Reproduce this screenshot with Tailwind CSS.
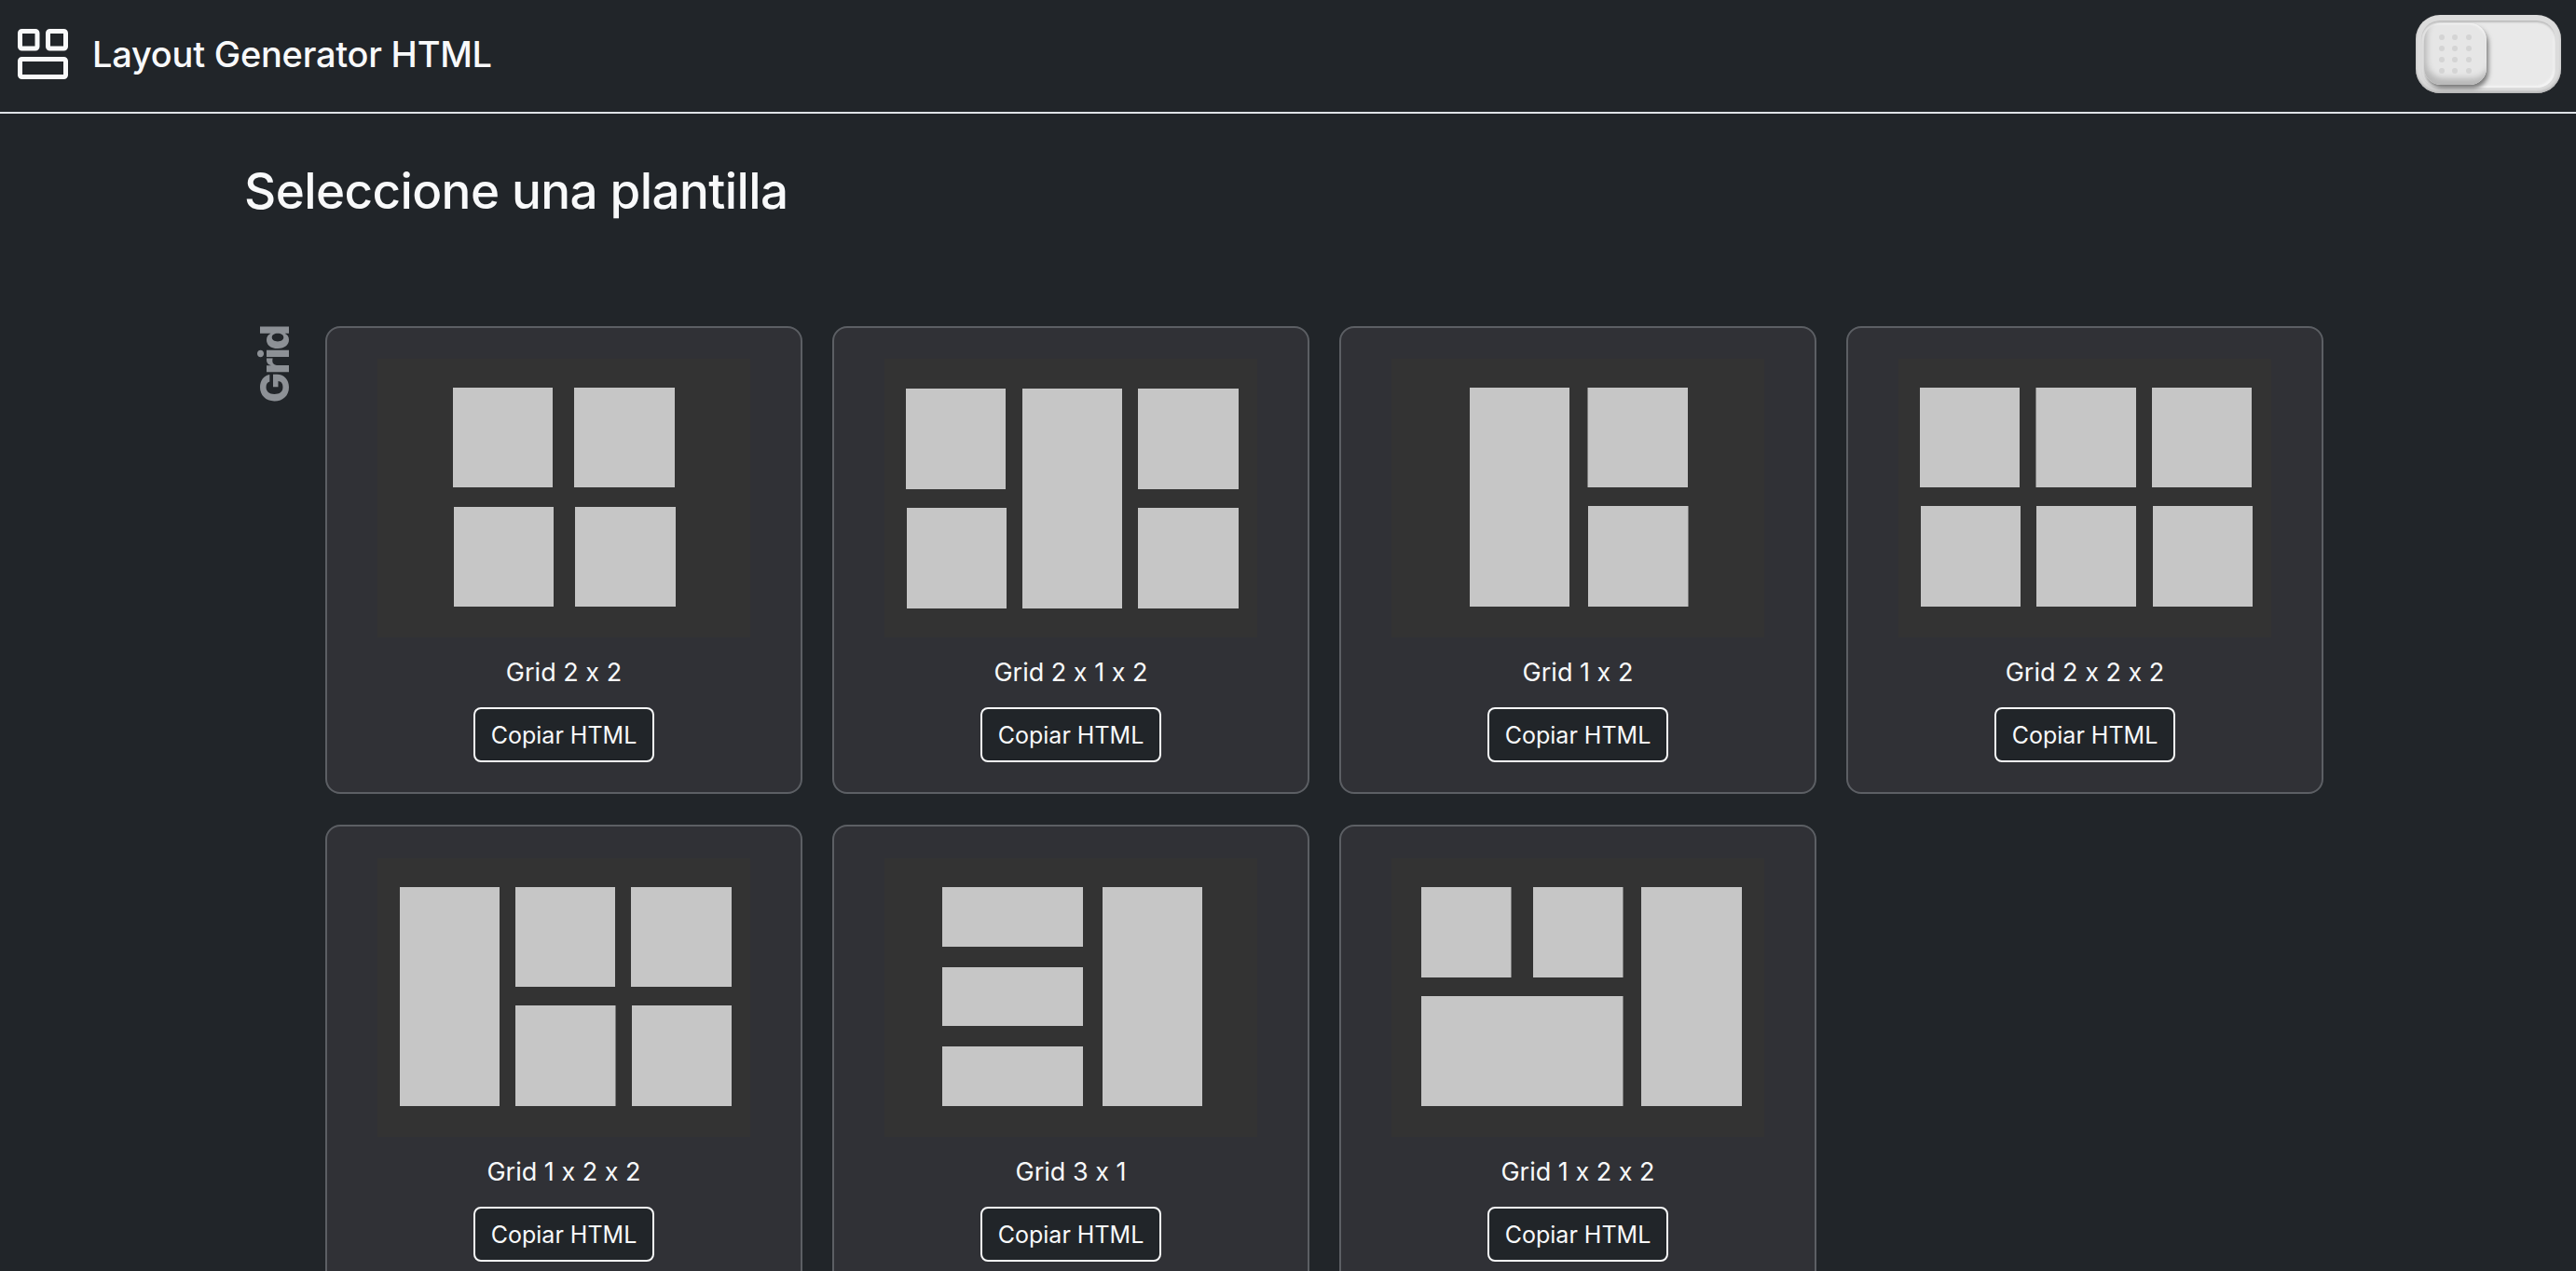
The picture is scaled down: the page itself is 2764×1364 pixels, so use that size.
<!DOCTYPE html>
<html lang="es">
<head>
    <meta charset="UTF-8">
    <meta name="viewport" content="width=device-width, initial-scale=1.0">
    <title>Layout Generator HTML</title>
    <script src="https://cdn.jsdelivr.net/npm/@tailwindcss/browser@4"></script>
</head>
<body class="bg-[#212529] text-[#f8f9fa] font-['Inter',sans-serif] [font-feature-settings:'calt'_0]">
<div class="h-[1364px] overflow-hidden">

    <!-- Navbar -->
    <header class="h-[122px] border-b-2 border-[#dee2e6] pl-[19px] pr-[16px] flex justify-between items-start">
        <div class="flex items-center gap-[26px] h-[116px]">
            <svg class="w-[54px] h-[54px]" viewBox="0 0 54 54" fill="none" stroke="#f8f9fa" stroke-width="5">
                <rect x="2.5" y="2.5" width="18.5" height="18.5" rx="2"/>
                <rect x="32.5" y="2.5" width="19" height="18.5" rx="2"/>
                <rect x="2.5" y="32.5" width="49" height="19" rx="2"/>
            </svg>
            <span class="text-[38px] leading-[57px] font-medium tracking-[-0.25px]">Layout Generator HTML</span>
        </div>

        <!-- Toggle -->
        <div class="relative mt-[16px] w-[156px] h-[84px] rounded-[26px] bg-[#dcdcdc] p-[6px] shadow-[inset_0_-2px_3px_#b5b5b5]">
            <div class="w-full h-full rounded-[20px] bg-[#e9e9e9] shadow-[inset_0_2px_2px_#bdbdbd,inset_-2px_-2px_2px_#f4f4f4]"></div>
            <div class="absolute left-[9px] top-[9px] w-[67px] h-[66px] rounded-[18px] bg-[#e6e6e6] shadow-[inset_3px_-7px_6px_#b8b8b8,inset_-1px_1px_2px_#f5f5f5,2px_4px_5px_#787878] grid grid-cols-3 gap-x-[6px] gap-y-[6px] content-center justify-center justify-items-center px-[15px]">
                <span class="w-[6px] h-[6px] rounded-full bg-[#d4d4d4]"></span><span class="w-[6px] h-[6px] rounded-full bg-[#d4d4d4]"></span><span class="w-[6px] h-[6px] rounded-full bg-[#d4d4d4]"></span>
                <span class="w-[6px] h-[6px] rounded-full bg-[#d4d4d4]"></span><span class="w-[6px] h-[6px] rounded-full bg-[#d4d4d4]"></span><span class="w-[6px] h-[6px] rounded-full bg-[#d4d4d4]"></span>
                <span class="w-[6px] h-[6px] rounded-full bg-[#d4d4d4]"></span><span class="w-[6px] h-[6px] rounded-full bg-[#d4d4d4]"></span><span class="w-[6px] h-[6px] rounded-full bg-[#d4d4d4]"></span>
                <span class="w-[6px] h-[6px] rounded-full bg-[#d4d4d4]"></span><span class="w-[6px] h-[6px] rounded-full bg-[#d4d4d4]"></span><span class="w-[6px] h-[6px] rounded-full bg-[#d4d4d4]"></span>
            </div>
        </div>
    </header>

    <main class="pl-[262px]">
        <h1 class="mt-[50px] mb-[111px] text-[53px] leading-[67px] font-medium tracking-[-0.6px]">Seleccione una plantilla</h1>

        <section class="flex">
            <div class="w-[87px] shrink-0 pl-[7px]">
                <h2 class="[writing-mode:vertical-rl] rotate-180 text-[43px] leading-[50px] font-extrabold tracking-[-2px] text-[#8d9196]">Grid</h2>
            </div>

            <div class="grid grid-cols-[repeat(4,512px)] gap-x-[32px] gap-y-[33px]">

                <!-- Grid 2 x 2 -->
                <div class="flex flex-col items-center border-2 border-[#5c5f64] rounded-[16px] bg-[#303136] pt-[33px] pb-[32px]">
                    <div class="w-[400px] h-[299px] bg-[#333333]">
                        <svg class="blur-[0.7px]" width="400" height="299" fill="#c6c6c6">
                            <rect x="81" y="31" width="107" height="107"/><rect x="211" y="31" width="108" height="107"/>
                            <rect x="82" y="159" width="107" height="107"/><rect x="212" y="159" width="108" height="107"/>
                        </svg>
                    </div>
                    <p class="mt-[17px] text-[27px] leading-[42px]">Grid 2 x 2</p>
                    <button class="mt-[16px] h-[59px] px-[17px] border-2 border-[#f8f9fa] rounded-[8px] bg-[#212529] text-[25px] leading-[42px]">Copiar HTML</button>
                </div>

                <!-- Grid 2 x 1 x 2 -->
                <div class="flex flex-col items-center border-2 border-[#5c5f64] rounded-[16px] bg-[#303136] pt-[33px] pb-[32px]">
                    <div class="w-[400px] h-[299px] bg-[#333333]">
                        <svg class="blur-[0.7px]" width="400" height="299" fill="#c6c6c6">
                            <rect x="23" y="32" width="107" height="108"/><rect x="24" y="160" width="107" height="108"/>
                            <rect x="148" y="32" width="107" height="236"/>
                            <rect x="272" y="32" width="108" height="108"/><rect x="272" y="160" width="108" height="108"/>
                        </svg>
                    </div>
                    <p class="mt-[17px] text-[27px] leading-[42px]">Grid 2 x 1 x 2</p>
                    <button class="mt-[16px] h-[59px] px-[17px] border-2 border-[#f8f9fa] rounded-[8px] bg-[#212529] text-[25px] leading-[42px]">Copiar HTML</button>
                </div>

                <!-- Grid 1 x 2 -->
                <div class="flex flex-col items-center border-2 border-[#5c5f64] rounded-[16px] bg-[#303136] pt-[33px] pb-[32px]">
                    <div class="w-[400px] h-[299px] bg-[#333333]">
                        <svg class="blur-[0.7px]" width="400" height="299" fill="#c6c6c6">
                            <rect x="84" y="31" width="107" height="235"/>
                            <rect x="210.5" y="31" width="107.5" height="107"/><rect x="211" y="158" width="107.5" height="108"/>
                        </svg>
                    </div>
                    <p class="mt-[17px] text-[27px] leading-[42px]">Grid 1 x 2</p>
                    <button class="mt-[16px] h-[59px] px-[17px] border-2 border-[#f8f9fa] rounded-[8px] bg-[#212529] text-[25px] leading-[42px]">Copiar HTML</button>
                </div>

                <!-- Grid 2 x 2 x 2 -->
                <div class="flex flex-col items-center border-2 border-[#5c5f64] rounded-[16px] bg-[#303136] pt-[33px] pb-[32px]">
                    <div class="w-[400px] h-[299px] bg-[#333333]">
                        <svg class="blur-[0.7px]" width="400" height="299" fill="#c6c6c6">
                            <rect x="23" y="31" width="107" height="107"/><rect x="147.5" y="31" width="107.5" height="107"/><rect x="272" y="31" width="107" height="107"/>
                            <rect x="24" y="158" width="107" height="108"/><rect x="148" y="158" width="107" height="108"/><rect x="273" y="158" width="107" height="108"/>
                        </svg>
                    </div>
                    <p class="mt-[17px] text-[27px] leading-[42px]">Grid 2 x 2 x 2</p>
                    <button class="mt-[16px] h-[59px] px-[17px] border-2 border-[#f8f9fa] rounded-[8px] bg-[#212529] text-[25px] leading-[42px]">Copiar HTML</button>
                </div>

                <!-- Grid 1 x 2 x 2 -->
                <div class="flex flex-col items-center border-2 border-[#5c5f64] rounded-[16px] bg-[#303136] pt-[34px] pb-[32px]">
                    <div class="w-[400px] h-[299px] bg-[#333333]">
                        <svg class="blur-[0.7px]" width="400" height="299" fill="#c6c6c6">
                            <rect x="24" y="31" width="107" height="235"/>
                            <rect x="148" y="31" width="107" height="107"/><rect x="272" y="31" width="108" height="107"/>
                            <rect x="148" y="158" width="107.5" height="108"/><rect x="273" y="158" width="107" height="108"/>
                        </svg>
                    </div>
                    <p class="mt-[17px] text-[27px] leading-[42px]">Grid 1 x 2 x 2</p>
                    <button class="mt-[16px] h-[59px] px-[17px] border-2 border-[#f8f9fa] rounded-[8px] bg-[#212529] text-[25px] leading-[42px]">Copiar HTML</button>
                </div>

                <!-- Grid 3 x 1 -->
                <div class="flex flex-col items-center border-2 border-[#5c5f64] rounded-[16px] bg-[#303136] pt-[34px] pb-[32px]">
                    <div class="w-[400px] h-[299px] bg-[#333333]">
                        <svg class="blur-[0.7px]" width="400" height="299" fill="#c6c6c6">
                            <rect x="62" y="31" width="151" height="64"/><rect x="62" y="117" width="151" height="63"/><rect x="62" y="202" width="151" height="64"/>
                            <rect x="234" y="31" width="107" height="235"/>
                        </svg>
                    </div>
                    <p class="mt-[17px] text-[27px] leading-[42px]">Grid 3 x 1</p>
                    <button class="mt-[16px] h-[59px] px-[17px] border-2 border-[#f8f9fa] rounded-[8px] bg-[#212529] text-[25px] leading-[42px]">Copiar HTML</button>
                </div>

                <!-- Grid 1 x 2 x 2 (segunda) -->
                <div class="flex flex-col items-center border-2 border-[#5c5f64] rounded-[16px] bg-[#303136] pt-[34px] pb-[32px]">
                    <div class="w-[400px] h-[299px] bg-[#333333]">
                        <svg class="blur-[0.7px]" width="400" height="299" fill="#c6c6c6">
                            <rect x="32" y="31" width="96.5" height="97"/><rect x="152" y="31" width="96.5" height="97"/>
                            <rect x="32" y="148" width="216.5" height="118"/>
                            <rect x="268" y="31" width="108" height="235"/>
                        </svg>
                    </div>
                    <p class="mt-[17px] text-[27px] leading-[42px]">Grid 1 x 2 x 2</p>
                    <button class="mt-[16px] h-[59px] px-[17px] border-2 border-[#f8f9fa] rounded-[8px] bg-[#212529] text-[25px] leading-[42px]">Copiar HTML</button>
                </div>

            </div>
        </section>
    </main>
</div>
</body>
</html>
